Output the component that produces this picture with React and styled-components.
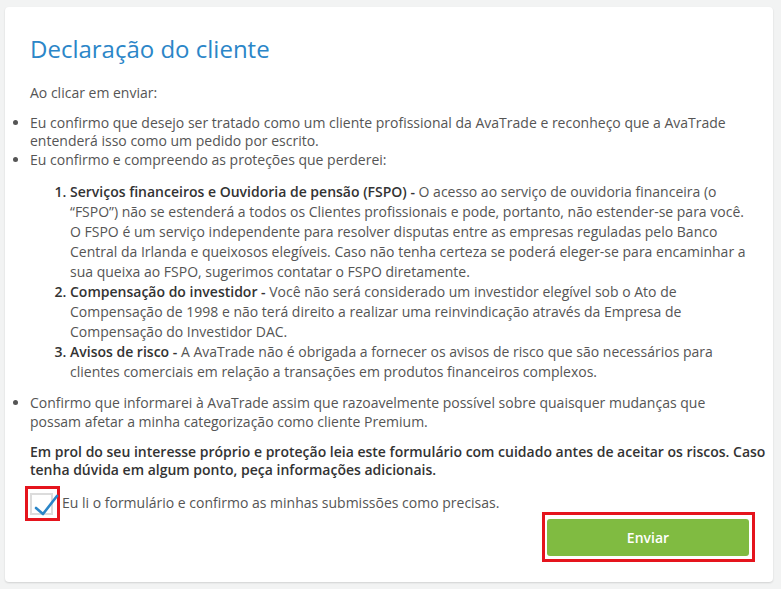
import React from "react";
import styled, { createGlobalStyle } from "styled-components";

const GlobalStyle = createGlobalStyle`
  body {
    margin: 0;
    background: #f2f3f3;
    font-family: "Open Sans", "Liberation Sans", sans-serif;
    font-size: 14px;
    line-height: 18.6px;
    color: #555;
  }
`;

const Page = styled.div`
  padding: 7px 8px 8px 5px;
`;

const Card = styled.div`
  background: #fff;
  border-radius: 4px;
  box-shadow: 0 1px 2px rgba(0, 0, 0, 0.14);
  padding: 26px 25px 20px 25px;
`;

const Title = styled.h2`
  margin: 0 0 19px;
  font-size: 24px;
  line-height: 32px;
  font-weight: 400;
  color: #2b86c8;
`;

const Para = styled.p`
  margin: 0 0 11px;
`;

const Notice = styled.p`
  margin: 0 -22px 6px 0;
  color: #333;
  font-weight: 600;
`;

const Bullets = styled.ul`
  margin: 0 0 11px;
  padding-left: 0;
  list-style: disc outside;
`;

const Numbers = styled.ol`
  margin: 13px 0 12px;
  padding-left: 40px;
  line-height: 20px;

  li::marker {
    font-weight: 600;
    color: #333;
  }
`;

const Strong = styled.strong`
  font-weight: 600;
  color: #333;
`;

const ConfirmRow = styled.label`
  display: flex;
  align-items: center;
  gap: 2px;
  margin-left: -5px;
`;

const Marked = styled.span`
  display: inline-flex;
  border: 3px solid #e5141d;
  padding: ${(p) => p.pad};
`;

const Box = styled.span`
  position: relative;
  display: block;
  width: 23px;
  height: 22px;
  border: 2px solid #dcdcdc;
  box-sizing: border-box;
  background: #fff;

  svg {
    position: absolute;
    left: 1px;
    top: -2px;
  }
`;

const Footer = styled.div`
  display: flex;
  justify-content: flex-end;
  margin-right: -7px;
  margin-top: -9px;
`;

const SendButton = styled.button`
  width: 202px;
  height: 37px;
  border: 0;
  border-radius: 3px;
  background: #80bb41;
  color: #fff;
  font-family: inherit;
  font-size: 14px;
  font-weight: 600;
  cursor: pointer;
`;

export default function App() {
  return (
    <Page>
      <GlobalStyle />
      <Card>
        <Title>Declaração do cliente</Title>
        <Para>Ao clicar em enviar:</Para>
        <Bullets>
          <li>
            Eu confirmo que desejo ser tratado como um cliente profissional da AvaTrade e reconheço que a
            AvaTrade entenderá isso como um pedido por escrito.
          </li>
          <li>
            Eu confirmo e compreendo as proteções que perderei:
            <Numbers>
              <li>
                <Strong>Serviços financeiros e Ouvidoria de pensão (FSPO) -</Strong> O acesso ao serviço de
                ouvidoria financeira (o “FSPO”) não se estenderá a todos os Clientes profissionais e pode,
                portanto, não estender-se para você. O FSPO é um serviço independente para resolver disputas
                entre as empresas reguladas pelo Banco Central da Irlanda e queixosos elegíveis. Caso não
                tenha certeza se poderá eleger-se para encaminhar a sua queixa ao FSPO, sugerimos contatar o
                FSPO diretamente.
              </li>
              <li>
                <Strong>Compensação do investidor -</Strong> Você não será considerado um investidor elegível
                sob o Ato de Compensação de 1998 e não terá direito a realizar uma reinvindicação através da
                Empresa de Compensação do Investidor DAC.
              </li>
              <li>
                <Strong>Avisos de risco -</Strong> A AvaTrade não é obrigada a fornecer os avisos de risco que
                são necessários para clientes comerciais em relação a transações em produtos financeiros
                complexos.
              </li>
            </Numbers>
          </li>
          <li>
            Confirmo que informarei à AvaTrade assim que razoavelmente possível sobre quaisquer mudanças que
            possam afetar a minha categorização como cliente Premium.
          </li>
        </Bullets>
        <Notice>
          Em prol do seu interesse próprio e proteção leia este formulário com cuidado antes de aceitar os
          riscos. Caso tenha dúvida em algum ponto, peça informações adicionais.
        </Notice>
        <ConfirmRow>
          <Marked pad="4px 4px 3px 2px">
            <Box>
              <svg width="26" height="24" viewBox="0 0 26 24">
                <path d="M3 15 L10 21 L24 3" fill="none" stroke="#2b86c8" strokeWidth="2.6" strokeLinecap="round" strokeLinejoin="round" />
              </svg>
            </Box>
          </Marked>
          <span>Eu li o formulário e confirmo as minhas submissões como precisas.</span>
        </ConfirmRow>
        <Footer>
          <Marked pad="4px 3px 3px 2px">
            <SendButton>Enviar</SendButton>
          </Marked>
        </Footer>
      </Card>
    </Page>
  );
}
